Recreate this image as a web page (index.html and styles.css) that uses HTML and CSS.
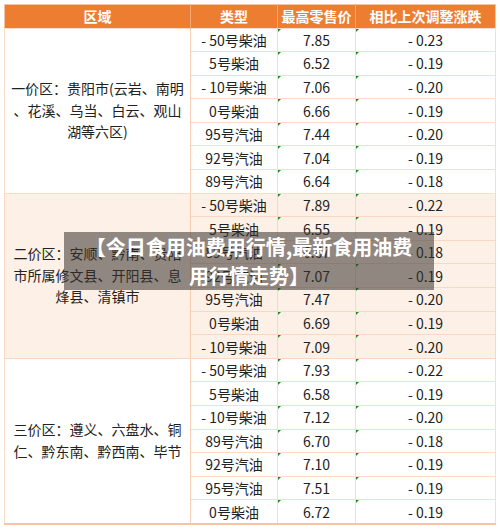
FILE: index.html
```html
<!DOCTYPE html>
<html lang="zh-CN">
<head>
    <meta charset="UTF-8">
    <meta name="viewport" content="width=device-width, initial-scale=1.0">
    <title>今日食用油费用行情</title>
    <link rel="stylesheet" href="styles.css">
</head>
<body>

<div class="sheet">
    <table class="price-table">
        <colgroup>
            <col class="col-area">
            <col class="col-type">
            <col class="col-price">
            <col class="col-diff">
        </colgroup>
        <thead>
            <tr>
                <th>区域</th>
                <th>类型</th>
                <th>最高零售价</th>
                <th>相比上次调整涨跌</th>
            </tr>
        </thead>
        <tbody class="zone-one">
            <tr>
                <td class="area" rowspan="7">一价区：贵阳市(云岩、南明<br>、花溪、乌当、白云、观山<br>湖等六区)</td>
                <td>- 50号柴油</td><td class="num">7.85</td><td class="num">- 0.23</td>
            </tr>
            <tr><td>5号柴油</td><td class="num">6.52</td><td class="num">- 0.19</td></tr>
            <tr><td>- 10号柴油</td><td class="num">7.06</td><td class="num">- 0.20</td></tr>
            <tr><td>0号柴油</td><td class="num">6.66</td><td class="num">- 0.19</td></tr>
            <tr><td>95号汽油</td><td class="num">7.44</td><td class="num">- 0.20</td></tr>
            <tr><td>92号汽油</td><td class="num">7.04</td><td class="num">- 0.19</td></tr>
            <tr><td>89号汽油</td><td class="num">6.64</td><td class="num">- 0.18</td></tr>
        </tbody>
        <tbody class="zone-two">
            <tr>
                <td class="area" rowspan="7">二价区：安顺、黔南、贵阳<br>市所属修文县、开阳县、息<br>烽县、清镇市</td>
                <td>- 50号柴油</td><td class="num">7.89</td><td class="num">- 0.22</td>
            </tr>
            <tr><td>5号柴油</td><td class="num">6.55</td><td class="num">- 0.19</td></tr>
            <tr><td>89号汽油</td><td class="num">6.67</td><td class="num">- 0.18</td></tr>
            <tr><td>92号汽油</td><td class="num">7.07</td><td class="num">- 0.19</td></tr>
            <tr><td>95号汽油</td><td class="num">7.47</td><td class="num">- 0.20</td></tr>
            <tr><td>0号柴油</td><td class="num">6.69</td><td class="num">- 0.19</td></tr>
            <tr><td>- 10号柴油</td><td class="num">7.09</td><td class="num">- 0.20</td></tr>
        </tbody>
        <tbody class="zone-three">
            <tr>
                <td class="area" rowspan="7">三价区：遵义、六盘水、铜<br>仁、黔东南、黔西南、毕节</td>
                <td>- 50号柴油</td><td class="num">7.93</td><td class="num">- 0.22</td>
            </tr>
            <tr><td>5号柴油</td><td class="num">6.58</td><td class="num">- 0.19</td></tr>
            <tr><td>- 10号柴油</td><td class="num">7.12</td><td class="num">- 0.20</td></tr>
            <tr><td>89号汽油</td><td class="num">6.70</td><td class="num">- 0.18</td></tr>
            <tr><td>92号汽油</td><td class="num">7.10</td><td class="num">- 0.19</td></tr>
            <tr><td>95号汽油</td><td class="num">7.51</td><td class="num">- 0.19</td></tr>
            <tr><td>0号柴油</td><td class="num">6.72</td><td class="num">- 0.19</td></tr>
        </tbody>
    </table>

    <div class="caption">【今日食用油费用行情,最新食用油费<br>用行情走势】</div>
</div>

</body>
</html>
```

FILE: styles.css
```css
body {
    margin: 0;
    background-color: #fff;
    font-family: "Noto Sans CJK SC", "Noto Sans", sans-serif;
    color: #222;
}

.sheet {
    position: relative;
    padding: 4px 5px 4px 4px;
}

.price-table {
    width: 491px;
    table-layout: fixed;
    border-collapse: collapse;
    border: 1px solid #f6c4a4;
    border-bottom-width: 2px;
    font-size: 14px;
}

.col-area  { width: 186px; }
.col-type  { width: 87px; }
.col-price { width: 78px; }
.col-diff  { width: 140px; }

.price-table th {
    height: 22.5px;
    padding: 0;
    line-height: 20px;
    background-color: #ed7d31;
    color: #fff;
    font-weight: bold;
    text-align: center;
    border-left: 1px solid #f4a877;
}

.price-table th:first-child {
    border-left: none;
}

.price-table td {
    position: relative;
    height: 22.6px;
    padding: 0;
    line-height: 20px;
    text-align: center;
    white-space: nowrap;
    border: 1px solid #fbdcc8;
}

.price-table td.area {
    line-height: 21.5px;
    padding: 0 4px;
    border-right-color: #f8cfb4;
}

/* small green markers of the sheet cells */
.price-table td.num::before {
    content: "";
    position: absolute;
    top: 0;
    left: 0;
    border-top: 3px solid #1f8a1f;
    border-right: 3px solid transparent;
}

.zone-two td {
    background-color: #fdf0e7;
    border-color: #f9d8c3;
}

.caption {
    position: absolute;
    left: 64px;
    top: 232px;
    width: 370px;
    height: 58px;
    background-color: rgba(55, 50, 45, 0.55);
    color: #fff;
    font-size: 20px;
    font-weight: bold;
    line-height: 29px;
    text-align: center;
}
```
